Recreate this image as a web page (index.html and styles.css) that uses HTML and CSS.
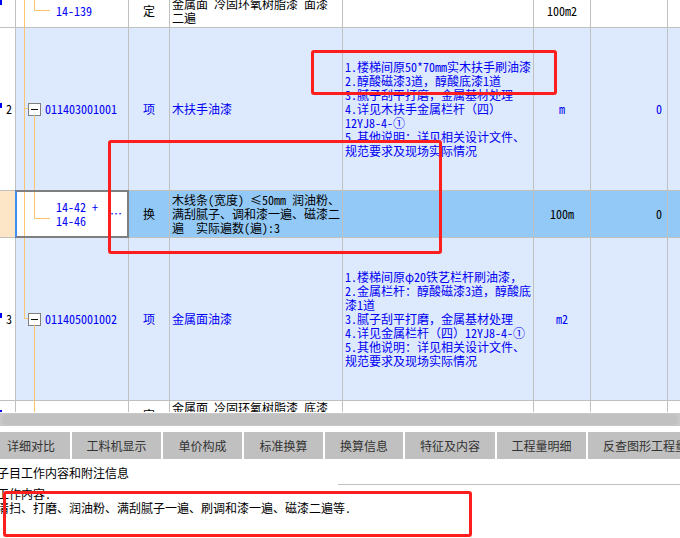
FILE: index.html
```html
<!DOCTYPE html>
<html lang="zh-CN">
<head>
<meta charset="utf-8">
<title>子目</title>
<link rel="stylesheet" href="styles.css">
</head>
<body>
<div class="app">
  <div class="grid-wrap">
    <div class="grid">
      <div class="row r1">
        <div class="c c0"><span class="tick t1"></span></div>
        <div class="c c1 sub"><span class="blue">14-139</span></div>
        <div class="c c2">定</div>
        <div class="c c3">金属面 冷固环氧树脂漆 面漆<br>二遍</div>
        <div class="c c4"></div>
        <div class="c c5">100m2</div>
        <div class="c c6"></div>
        <div class="c c7"></div>
      </div>
      <div class="row r2 item">
        <div class="c c0"><span class="tick t2"></span>2</div>
        <div class="c c1 node"><span class="exp"></span><span class="blue">011403001001</span></div>
        <div class="c c2 blue">项</div>
        <div class="c c3 blue">木扶手油漆</div>
        <div class="c c4 blue"><div class="txt">1.楼梯间原50*70mm实木扶手刷油漆<br>2.醇酸磁漆3道<span class="fw">，</span>醇酸底漆1道<br>3.腻子刮平打磨<span class="fw">，</span>金属基材处理<br>4.详见木扶手金属栏杆<span class="fw">（</span>四<span class="fw">）</span><br>12YJ8-4-①<br>5.其他说明<span class="fw">：</span>详见相关设计文件、<br>规范要求及现场实际情况</div></div>
        <div class="c c5 blue">m</div>
        <div class="c c6 blue">0</div>
        <div class="c c7"></div>
      </div>
      <div class="row r3 sel">
        <div class="c c0"></div>
        <div class="c c1 sub cur"><span class="blue">14-42 +<br>14-46</span><span class="more blue">…</span></div>
        <div class="c c2">换</div>
        <div class="c c3">木线条(宽度) ≤50mm 润油粉、<br>满刮腻子、调和漆一遍、磁漆二<br>遍&nbsp;&nbsp;实际遍数(遍):3</div>
        <div class="c c4"></div>
        <div class="c c5">100m</div>
        <div class="c c6">0</div>
        <div class="c c7"></div>
      </div>
      <div class="row r4 item">
        <div class="c c0"><span class="tick t2"></span>3</div>
        <div class="c c1 node"><span class="exp"></span><span class="blue">011405001002</span></div>
        <div class="c c2 blue">项</div>
        <div class="c c3 blue">金属面油漆</div>
        <div class="c c4 blue"><div class="txt">1.楼梯间原φ20铁艺栏杆刷油漆<span class="fw">，</span><br>2.金属栏杆<span class="fw">：</span>醇酸磁漆3道<span class="fw">，</span>醇酸底<br>漆1道<br>3.腻子刮平打磨<span class="fw">，</span>金属基材处理<br>4.详见金属栏杆<span class="fw">（</span>四<span class="fw">）</span>12YJ8-4-①<br>5.其他说明<span class="fw">：</span>详见相关设计文件、<br>规范要求及现场实际情况</div></div>
        <div class="c c5 blue">m2</div>
        <div class="c c6"></div>
        <div class="c c7"></div>
      </div>
      <div class="row r5">
        <div class="c c0"><span class="tick t5"></span></div>
        <div class="c c1"></div>
        <div class="c c2 top7">定</div>
        <div class="c c3 top0">金属面 冷固环氧树脂漆 底漆<br>二遍</div>
        <div class="c c4"></div>
        <div class="c c5"></div>
        <div class="c c6"></div>
        <div class="c c7"></div>
      </div>
    </div>
    <svg class="tree" width="680" height="412" viewBox="0 0 680 412">
      <path d="M24.5 0V318.5H28M24 108.5H28M34.5 0V10.5H50M34.5 115V218.5H50M34.5 325V412" fill="none" stroke="#fcc46c" stroke-width="1"/>
    </svg>
  </div>
  <div class="hscroll"><div class="thumb"></div></div>
  <div class="tabs">
    <div class="tab w1">详细对比</div>
    <div class="tab w2">工料机显示</div>
    <div class="tab w3">单价构成</div>
    <div class="tab w4">标准换算</div>
    <div class="tab w5">换算信息</div>
    <div class="tab w6">特征及内容</div>
    <div class="tab w7">工程量明细</div>
    <div class="tab w8">反查图形工程量</div>
  </div>
  <div class="panel-title">子目工作内容和附注信息</div>
  <div class="panel-rule"></div>
  <div class="panel-body">工作内容:<br>清扫、打磨、润油粉、满刮腻子一遍、刷调和漆一遍、磁漆二遍等.</div>

  <div class="mark m1"></div>
  <div class="mark m2"></div>
  <div class="mark m3"></div>
</div>
</body>
</html>
```
FILE: styles.css
```css
* { box-sizing: border-box; margin: 0; padding: 0; }
html, body { width: 680px; height: 538px; overflow: hidden; background: #fff; }
body {
  font-family: "Noto Sans CJK SC", "Noto Sans", sans-serif;
  font-size: 12px;
  line-height: 14px;
  color: #000;
  font-feature-settings: "hwid" 1;
}
.app { position: relative; width: 680px; height: 538px; overflow: hidden; }

.grid-wrap { position: relative; height: 412px; overflow: hidden; }
.grid { margin-top: -6px; }
.row { display: flex; border-bottom: 1px solid #c0c0c0; }
.r1 { height: 34px; }
.r2, .r4 { height: 163px; }
.r3 { height: 47px; }
.r5 { height: 40px; border-bottom: none; }

.c {
  border-right: 1px solid #c0c0c0;
  display: flex;
  align-items: center;
  white-space: nowrap;
  overflow: hidden;
  position: relative;
}
.c0 { width: 16px; padding-left: 6px; }
.c1 { width: 113px; }
.c2 { width: 41px; justify-content: center; }
.c3 { width: 173px; padding-left: 2px; }
.c4 { width: 191px; padding-left: 2px; }
.c5 { width: 57px; justify-content: center; }
.c6 { width: 77px; justify-content: flex-end; padding-right: 5px; }
.c7 { flex: 1; border-right: none; }

.txt { white-space: nowrap; }
.fw { font-feature-settings: normal; }
.blue { color: #0000f4; }

.sub { padding-left: 40px; }
.node { padding-left: 12px; }
.exp {
  position: relative;
  width: 13px;
  height: 13px;
  border: 1px solid #7f7f7f;
  background: #fff;
  margin-right: 4px;
  flex: none;
}
.exp::before {
  content: "";
  position: absolute;
  left: 2px;
  right: 2px;
  top: 5px;
  height: 1px;
  background: #111;
}

.tick { position: absolute; left: 0; width: 2px; height: 5px; background: #0000f4; }
.t1 { top: 6px; }
.t2 { top: 75px; }
.t5 { top: 9px; height: 3px; }

.item .c:not(.c0) { background: #dde9fc; }
.sel .c { background: #93c9f6; }
.sel .c0 { background: #fde6c8; }
.sel .c1 { background: #fff; overflow: visible; }
.cur::after {
  content: "";
  position: absolute;
  top: -1px;
  bottom: -1px;
  left: -1px;
  right: -1px;
  border-top: 2px solid #7f7f7f;
  border-bottom: 2px solid #7f7f7f;
  border-right: 2px solid #7f7f7f;
  border-left: 2px solid #3d8ef2;
  z-index: 2;
}
.more { margin-left: auto; margin-right: 6px; }

.top7 { align-items: flex-start; padding-top: 7px; }
.top0 { align-items: flex-start; }

.tree { position: absolute; left: 0; top: 0; z-index: 1; pointer-events: none; }

.hscroll { height: 13px; margin-top: 1px; background: #c8c8c8; padding: 1px 2px; }
.thumb { height: 100%; background: #c1c1c1; border-radius: 5px; }

.tabs { display: flex; gap: 2px; margin-top: 6px; height: 27px; overflow: hidden; }
.tab {
  flex: none;
  background: #c0c0c0;
  color: #333;
  display: flex;
  align-items: center;
  justify-content: center;
  white-space: nowrap;
  font-feature-settings: normal;
}
.w1 { width: 78px; margin-left: -8px; }
.w2 { width: 89px; }
.w3 { width: 79px; }
.w4 { width: 79px; }
.w5 { width: 78px; }
.w6 { width: 90px; }
.w7 { width: 89px; }
.w8 { width: 114px; }

.panel-title { padding-top: 7px; margin-left: -3px; white-space: nowrap; font-feature-settings: normal; }
.panel-rule { height: 1px; background: #c0c0c0; margin: 4px 0 0 338px; }
.panel-body { padding-top: 2px; margin-left: -3px; white-space: nowrap; }

.mark {
  position: absolute;
  border: 3px solid #ff1e1e;
  border-radius: 3px;
  z-index: 5;
}
.m1 { left: 311px; top: 50px; width: 246px; height: 45px; }
.m2 { left: 108px; top: 140px; width: 334px; height: 114px; }
.m3 { left: 3px; top: 491px; width: 469px; height: 46px; }
```
